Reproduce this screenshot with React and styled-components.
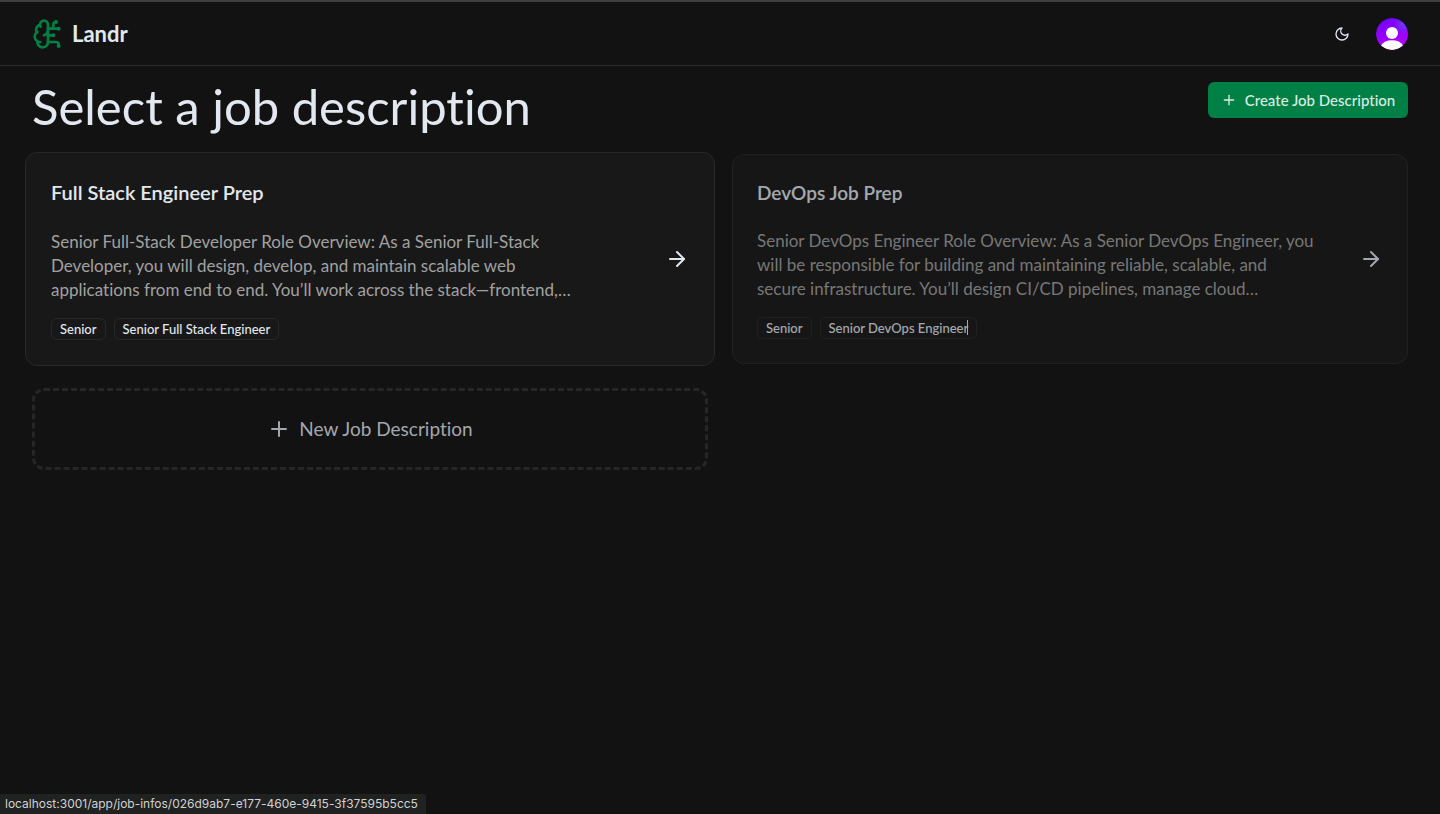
import React from "react";
import styled, { createGlobalStyle } from "styled-components";
import { ArrowRight, BrainCircuit, Plus } from "lucide-react";

const GlobalStyle = createGlobalStyle`
  *, *::before, *::after { box-sizing: border-box; }
  body {
    margin: 0;
    background: #121212;
    color: #e2e8f0;
    font-family: Lato, "Open Sans", sans-serif;
    font-size: 17px;
    font-variant-ligatures: none;
    line-height: 24px;
  }
  h1, h2, p, ul { margin: 0; padding: 0; }
  a { color: inherit; text-decoration: none; }
  button { font: inherit; font-variant-ligatures: none; cursor: pointer; }
  svg { flex-shrink: 0; }
`;

const Page = styled.div`
  min-height: 100vh;
  border-top: 2px solid #3f3f3f;
`;

const Header = styled.header`
  display: flex;
  align-items: center;
  justify-content: space-between;
  height: 64px;
  padding: 0 32px;
  border-bottom: 1px solid #2a2a2a;
`;

const Brand = styled.a`
  display: flex;
  align-items: center;
  gap: 8px;
  font-size: 22px;
  font-weight: 700;

  svg { color: #008045; }
`;

const Actions = styled.div`
  display: flex;
  align-items: center;
  gap: 16px;
`;

const IconButton = styled.button`
  display: grid;
  place-items: center;
  width: 36px;
  height: 36px;
  padding: 0;
  border: 0;
  border-radius: 6px;
  background: transparent;
  color: #e2e8f0;
`;

const AvatarButton = styled(IconButton)`
  width: 32px;
  height: 32px;
  border-radius: 50%;
  overflow: hidden;
`;

const Main = styled.main`
  padding: 16px 32px;
`;

const TitleRow = styled.div`
  display: flex;
  align-items: flex-start;
  justify-content: space-between;
  gap: 16px;
  margin-bottom: 24px;
`;

const Title = styled.h1`
  font-size: 49px;
  font-weight: 400;
  line-height: 48px;
`;

const CreateButton = styled.button`
  display: flex;
  align-items: center;
  justify-content: center;
  gap: 8px;
  min-width: 200px;
  height: 36px;
  padding: 0 12px;
  border: 0;
  border-radius: 6px;
  background: #008045;
  color: #dbece4;
  font-size: 15px;
  font-weight: 500;
  white-space: nowrap;
`;

const Grid = styled.div`
  display: grid;
  grid-template-columns: repeat(2, minmax(0, 1fr));
  gap: 24px;
`;

const Card = styled.a`
  display: flex;
  align-items: center;
  justify-content: space-between;
  gap: 16px;
  margin: ${(p) => (p.$active ? "-2px -7px" : "0")};
  padding: ${(p) => (p.$active ? "25px" : "24px")};
  border: 1px solid #282828;
  border-radius: 12px;
  background: #181818;
  opacity: ${(p) => (p.$active ? 1 : 0.7)};
`;

const CardBody = styled.div`
  min-width: 0;
`;

const CardTitle = styled.h2`
  margin-bottom: ${(p) => (p.$active ? "24px" : "22px")};
  font-size: ${(p) => (p.$active ? "20px" : "19px")};
  font-weight: 600;
  line-height: 28px;
`;

const Description = styled.p`
  margin-bottom: 16px;
  color: #a1a1a1;
`;

const Tags = styled.ul`
  display: flex;
  gap: 8px;
  list-style: none;
`;

const Tag = styled.li`
  position: relative;
  padding: 0 8px;
  border: 1px solid #282828;
  border-radius: 6px;
  font-size: 13px;
  font-weight: 500;
  line-height: 20px;
`;

const Caret = styled.span`
  position: absolute;
  top: 2px;
  right: 8px;
  width: 1px;
  height: 15px;
  background: #e2e8f0;
`;

const NewCard = styled.button`
  display: flex;
  align-items: center;
  justify-content: center;
  gap: 8px;
  height: 82px;
  border: 3px dashed #262626;
  border-radius: 12px;
  background: transparent;
  color: #a3a7ad;
  font-size: 19px;
`;

const StatusBar = styled.div`
  position: fixed;
  left: 0;
  bottom: 0;
  height: 20px;
  padding: 0 8px 0 5px;
  border-top-right-radius: 3px;
  background: #202121;
  color: #d2d2d2;
  font-family: Inter, sans-serif;
  font-size: 12px;
  line-height: 20px;
`;

const jobs = [
  {
    title: "Full Stack Engineer Prep",
    lines: [
      "Senior Full-Stack Developer Role Overview: As a Senior Full-Stack",
      "Developer, you will design, develop, and maintain scalable web",
      "applications from end to end. You’ll work across the stack—frontend,…",
    ],
    tags: ["Senior", "Senior Full Stack Engineer"],
    active: true,
  },
  {
    title: "DevOps Job Prep",
    lines: [
      "Senior DevOps Engineer Role Overview: As a Senior DevOps Engineer, you",
      "will be responsible for building and maintaining reliable, scalable, and",
      "secure infrastructure. You’ll design CI/CD pipelines, manage cloud…",
    ],
    tags: ["Senior", "Senior DevOps Engineer"],
    active: false,
  },
];

function MoonIcon() {
  return (
    <svg
      width="16"
      height="16"
      viewBox="0 0 24 24"
      fill="none"
      stroke="currentColor"
      strokeWidth="2"
      strokeLinecap="round"
      strokeLinejoin="round"
      aria-hidden="true"
    >
      <path d="M12 3a6 6 0 0 0 9 9 9 9 0 1 1-9-9Z" />
    </svg>
  );
}

function Avatar() {
  return (
    <svg width="32" height="32" viewBox="0 0 32 32" aria-hidden="true">
      <defs>
        <linearGradient id="avatar" x1="0" y1="0" x2="0.3" y2="1">
          <stop offset="0" stopColor="#7000ff" />
          <stop offset="0.45" stopColor="#8c00ff" />
          <stop offset="1" stopColor="#b400ff" />
        </linearGradient>
        <radialGradient id="avatarGlow" cx="0.85" cy="0.2" r="0.3">
          <stop offset="0" stopColor="#6a3cff" />
          <stop offset="1" stopColor="#6a3cff" stopOpacity="0" />
        </radialGradient>
      </defs>
      <circle cx="16" cy="16" r="16" fill="url(#avatar)" />
      <circle cx="16" cy="16" r="16" fill="url(#avatarGlow)" />
      <circle cx="16" cy="15" r="6" fill="#fff" />
      <path d="M5 27.500C7 24 11 22.300 16 22.300S25 24 27 27.500A16 16 0 0 1 5 27.500Z" fill="#fff" />
    </svg>
  );
}

function JobCard({ job }) {
  return (
    <Card href="#job" $active={job.active}>
      <CardBody>
        <CardTitle $active={job.active}>{job.title}</CardTitle>
        <Description>
          {job.lines.map((line, i) => (
            <React.Fragment key={line}>
              {i > 0 && <br />}
              {line}
            </React.Fragment>
          ))}
        </Description>
        <Tags>
          {job.tags.map((tag, i) => (
            <Tag key={tag}>
              {tag}
              {!job.active && i === 1 && <Caret />}
            </Tag>
          ))}
        </Tags>
      </CardBody>
      <ArrowRight size={24} />
    </Card>
  );
}

export default function App() {
  return (
    <Page>
      <GlobalStyle />
      <Header>
        <Brand href="#home">
          <BrainCircuit size={32} />
          Landr
        </Brand>
        <Actions>
          <IconButton aria-label="Toggle theme">
            <MoonIcon />
          </IconButton>
          <AvatarButton aria-label="Account">
            <Avatar />
          </AvatarButton>
        </Actions>
      </Header>
      <Main>
        <TitleRow>
          <Title>Select a job description</Title>
          <CreateButton>
            <Plus size={16} />
            Create Job Description
          </CreateButton>
        </TitleRow>
        <Grid>
          {jobs.map((job) => (
            <JobCard key={job.title} job={job} />
          ))}
          <NewCard>
            <Plus size={24} />
            New Job Description
          </NewCard>
        </Grid>
      </Main>
      <StatusBar>localhost:3001/app/job-infos/026d9ab7-e177-460e-9415-3f37595b5cc5</StatusBar>
    </Page>
  );
}
